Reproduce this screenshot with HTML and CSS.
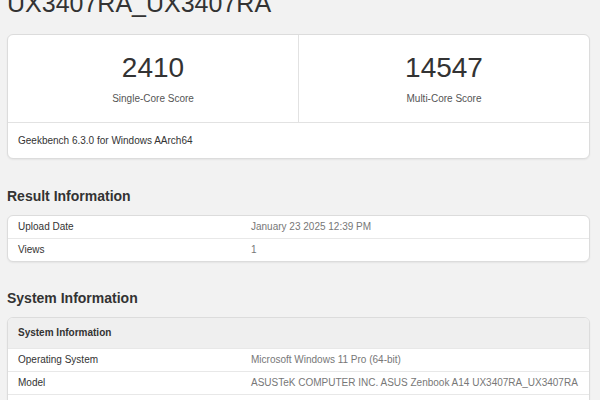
FILE: index.html
```html
<!DOCTYPE html>
<html lang="en">
  <head>
    <meta charset="UTF-8" />
    <meta name="viewport" content="width=device-width, initial-scale=1.0" />
    <title>ASUSTeK COMPUTER INC. ASUS Zenbook A14 UX3407RA_UX3407RA - Geekbench</title>
    <link rel="stylesheet" href="styles.css">
  </head>
  <body>
    <div class="page">
      <h1 class="device">UX3407RA_UX3407RA</h1>

      <div class="card">
        <div class="scores">
          <div class="score">
            <div class="score-value">2410</div>
            <div class="score-label">Single-Core Score</div>
          </div>
          <div class="score">
            <div class="score-value">14547</div>
            <div class="score-label">Multi-Core Score</div>
          </div>
        </div>
        <div class="card-note">Geekbench 6.3.0 for Windows AArch64</div>
      </div>

      <h2 class="section-title">Result Information</h2>
      <div class="card">
        <div class="row">
          <div class="name">Upload Date</div>
          <div class="value">January 23 2025 12:39 PM</div>
        </div>
        <div class="row">
          <div class="name">Views</div>
          <div class="value">1</div>
        </div>
      </div>

      <h2 class="section-title system">System Information</h2>
      <div class="card">
        <div class="row head">
          <div class="name">System Information</div>
        </div>
        <div class="row">
          <div class="name">Operating System</div>
          <div class="value">Microsoft Windows 11 Pro (64-bit)</div>
        </div>
        <div class="row">
          <div class="name">Model</div>
          <div class="value">ASUSTeK COMPUTER INC. ASUS Zenbook A14 UX3407RA_UX3407RA</div>
        </div>
        <div class="row last"></div>
      </div>
    </div>
  </body>
</html>
```

FILE: styles.css
```css
body {
  margin: 0;
  background-color: #f2f2f2;
  font-family: "Liberation Sans", Arial, sans-serif;
  color: #333;
  overflow: hidden;
}
.page {
  width: 583px;
  padding-left: 7px;
}
.device {
  margin: -12px 0 16px 0;
  font-size: 25px;
  line-height: 30px;
  font-weight: normal;
  white-space: nowrap;
}
.card {
  background-color: #fff;
  border: 1px solid #dcdcdc;
  border-radius: 6px;
  box-shadow: 0 1px 2px rgba(0, 0, 0, 0.06);
  overflow: hidden;
}
.scores {
  display: flex;
  border-bottom: 1px solid #e2e2e2;
}
.score {
  flex: 1;
  text-align: center;
  padding: 17px 0 16px 0;
}
.score + .score {
  border-left: 1px solid #e2e2e2;
}
.score-value {
  font-size: 28px;
  line-height: 32px;
}
.score-label {
  margin-top: 8px;
  font-size: 10px;
  line-height: 14px;
  color: #555;
}
.card-note {
  padding: 11px 10px 10px 10px;
  font-size: 10px;
  line-height: 14px;
}
.section-title {
  margin: 28px 0 10px 0;
  font-size: 14px;
  line-height: 18px;
  font-weight: bold;
}
.section-title.system {
  margin-top: 27px;
}
.row {
  display: flex;
  font-size: 10px;
  line-height: 14px;
  padding: 4px 0;
  border-top: 1px solid #e8e8e8;
}
.row:first-child {
  border-top: none;
}
.row.head {
  background-color: #efefef;
  padding: 8px 0;
  font-weight: bold;
}
.row.last {
  height: 14px;
}
.name {
  width: 223px;
  padding-left: 10px;
  color: #333;
}
.value {
  flex: 1;
  padding-left: 10px;
  color: #777;
}
```
